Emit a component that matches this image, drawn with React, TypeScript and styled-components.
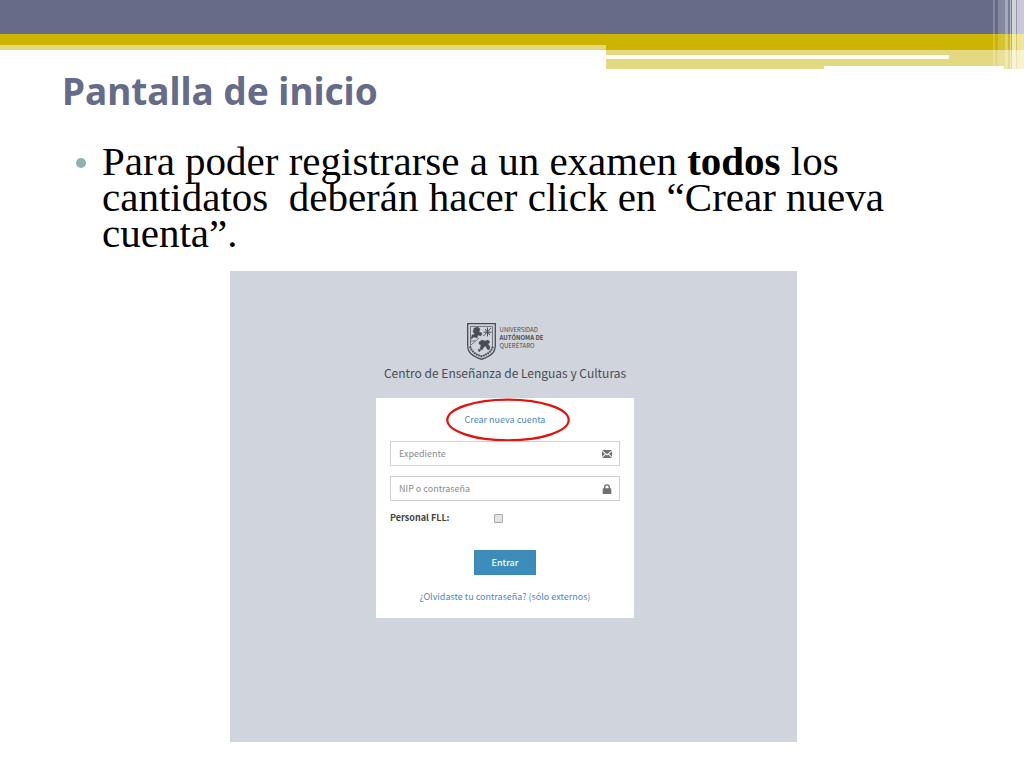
import React from 'react';
import styled, { createGlobalStyle } from 'styled-components';

const GlobalStyle = createGlobalStyle`
  *, *::before, *::after { box-sizing: border-box; }
  body { margin: 0; background: #fff; }
`;

const uiFont = `'Noto Sans CJK SC', 'Open Sans', sans-serif`;

const Slide = styled.div`
  display: flex;
  flex-direction: column;
  min-height: 100vh;
  background: #fff;
`;

const Banner = styled.header`
  position: relative;
`;

const Band = styled.div<{ $color: string; $height: number }>`
  height: ${(p) => p.$height}px;
  background: ${(p) => p.$color};
`;

const StepRow = styled.div`
  display: grid;
  grid-template-columns: 606fr 418fr;
  height: 24px;
`;

const StepLeft = styled.div`
  height: 5px;
  background: #e4d980;
`;

const StepRight = styled.div`
  display: flex;
  flex-direction: column;
  background: #e4d980;
  border-top: 5px solid #ccb400;
`;

const WhiteLine = styled.div`
  width: 82%;
  height: 4px;
  margin-top: 5px;
  background: #fffef6;
  border-radius: 0 1px 1px 0;
`;

const WhiteNotch = styled.div`
  width: 43%;
  height: 3px;
  margin: auto 20px 0 auto;
  background: #fff;
`;

const Strips = styled.div`
  position: absolute;
  top: 0;
  right: 0;
  bottom: 0;
  width: 31px;
  background: linear-gradient(
    to right,
    rgba(255, 255, 255, 0.2) 0 2px,
    transparent 2px 5px,
    rgba(255, 255, 255, 0.2) 5px 12px,
    rgba(255, 255, 255, 0.42) 12px 15px,
    rgba(255, 255, 255, 0.12) 15px 17px,
    rgba(255, 255, 255, 0.5) 17px 18px,
    rgba(255, 255, 255, 0.12) 18px 19px,
    rgba(255, 255, 255, 0.7) 19px 23px,
    rgba(255, 255, 255, 0.3) 23px 24px,
    rgba(255, 255, 255, 0.64) 24px 31px
  );
`;

const Content = styled.main`
  display: flex;
  flex-direction: column;
  padding: 0 62px 26px;
`;

const Title = styled.h1`
  margin: 0;
  color: #666b88;
  font: bold 37px/44px 'Noto Sans', sans-serif;
`;

const Bullets = styled.ul`
  list-style: none;
  margin: 30px 0 0;
  padding: 0 40px 0 40px;
`;

const Bullet = styled.li`
  position: relative;
  color: #000;
  font: 41px/36px 'Liberation Serif', serif;

  &::before {
    content: '';
    position: absolute;
    left: -26px;
    top: 15px;
    width: 10px;
    height: 10px;
    border-radius: 50%;
    background: #8fb3b0;
  }
`;

const Screen = styled.section`
  display: flex;
  flex-direction: column;
  align-items: center;
  align-self: center;
  width: 100%;
  max-width: 567px;
  min-height: 471px;
  margin: 20px 0 0 3px;
  padding: 52px 17px 124px 0;
  background: #d0d4dd;
  font-family: ${uiFont};
`;

const Logo = styled.div`
  display: flex;
  gap: 4px;
  color: #4a4c52;
`;

const LogoText = styled.div`
  padding-top: 3px;
  font: 6px/8px ${uiFont};

  strong, span { display: block; }
`;

const Center = styled.h2`
  margin: 3px 0 15px;
  color: #4a4c50;
  font-size: 12px;
  font-weight: 400;
  line-height: 20px;
`;

const Card = styled.form`
  display: flex;
  flex-direction: column;
  align-items: center;
  width: 258px;
  padding: 14px 14px 13px;
  background: #fff;
  font-size: 9px;
  line-height: 16px;
`;

const Highlight = styled.div`
  position: relative;
`;

const Ring = styled.svg`
  position: absolute;
  left: 50%;
  top: 50%;
  width: 124px;
  height: 43px;
  margin: -22px 0 0 -59px;
  pointer-events: none;
`;

const Link = styled.a`
  color: #5088b8;
  text-decoration: none;
`;

const Field = styled.label`
  display: flex;
  align-items: center;
  width: 100%;
  height: 25px;
  padding: 0 7px 0 8px;
  border: 1px solid #cdd1da;
  color: #707070;

  & + & { margin-top: 10px; }
`;

const Fields = styled.div`
  width: 100%;
  margin: 13px 0 9px;
`;

const Input = styled.input`
  flex: 1;
  min-width: 0;
  padding: 0;
  border: 0;
  outline: 0;
  background: transparent;
  font: 9px/16px ${uiFont};

  &::placeholder { color: #8c8c8c; opacity: 1; }
`;

const CheckRow = styled.div`
  display: grid;
  grid-template-columns: 104px 1fr;
  align-items: center;
  width: 100%;
  color: #444;
  font-weight: 700;
`;

const Check = styled.input`
  appearance: none;
  width: 9px;
  height: 9px;
  margin: 0;
  border: 1px solid #a8a8a8;
  border-radius: 1px;
  background: #e4e4e4;
`;

const Submit = styled.button`
  width: 62px;
  height: 25px;
  margin: 24px 0 14px;
  padding: 0;
  border: 1px solid #3c87b3;
  background: #3c8dbc;
  color: #fff;
  font: 500 9px/16px ${uiFont};
`;

const Shield = () => (
  <svg width="29" height="37" viewBox="0 0 29 37" fill="none" stroke="currentColor" aria-hidden="true">
    <path d="M.7.7h27.6v22c0 7-5 10.500-13.800 13.600C5.700 33.200.7 29.700.7 22.700z" strokeWidth="1.300" />
    <path d="M3.500 3.500h22v19c0 5-3.500 8-11 10.700-7.500-2.700-11-5.700-11-10.700z" strokeWidth=".7" />
    <path d="M4 22l8-7M3.500 18h5" strokeWidth=".7" />
    <path d="M7 5l4-1 2 2-1 3 3 1-1 3-3-1-1 3-3-1-3 2 1-4 3-1-2-2zM12 19l3-2 3 1 3-1 2 2-2 2 2 3-1 3-2-1-1-3-2 1-2 3-2-1 1-4-2-1zM11 26l3 1-2 2z" fill="currentColor" strokeWidth=".4" />
    <path d="M16.500 13l7.500-8M18 6l5 6M20.500 4.500v9M16.500 9.200h8" strokeWidth="1" />
    <path d="M3 23.500c2 5.500 5.500 8 11.500 10 6-2 9.500-4.500 11.500-10" strokeWidth="2" strokeDasharray="1.500 1" />
  </svg>
);

const Envelope = () => (
  <svg width="10" height="8" viewBox="0 0 10 8" fill="currentColor" aria-hidden="true">
    <path d="M0 0h10L5 4.300zM0 1.200l3 2.600L0 7zM10 1.200L7 3.800 10 7zM3.700 4.400L5 5.500l1.300-1.100L9.800 8H.2z" />
  </svg>
);

const Lock = () => (
  <svg width="10" height="10" viewBox="0 0 10 10" aria-hidden="true">
    <path d="M2.700 5V3.200a2.300 2.300 0 0 1 4.600 0V5" fill="none" stroke="currentColor" strokeWidth="1.400" />
    <rect x=".7" y="4.300" width="8.600" height="5.700" rx=".6" fill="currentColor" />
  </svg>
);

export default function App() {
  return (
    <Slide>
      <GlobalStyle />
      <Banner>
        <Band $color="#666b88" $height={34} />
        <Band $color="#ccb400" $height={11} />
        <StepRow>
          <StepLeft />
          <StepRight>
            <WhiteLine />
            <WhiteNotch />
          </StepRight>
        </StepRow>
        <Strips />
      </Banner>
      <Content>
        <Title>Pantalla de inicio</Title>
        <Bullets>
          <Bullet>
            Para poder registrarse a un examen <strong>todos</strong> los
            cantidatos&nbsp; deberán hacer click en “Crear nueva cuenta”.
          </Bullet>
        </Bullets>
        <Screen>
          <Logo>
            <Shield />
            <LogoText>
              <span>UNIVERSIDAD</span>
              <strong>AUTÓNOMA DE</strong>
              <span>QUERÉTARO</span>
            </LogoText>
          </Logo>
          <Center>Centro de Enseñanza de Lenguas y Culturas</Center>
          <Card onSubmit={(e) => e.preventDefault()}>
            <Highlight>
              <Link href="#crear">Crear nueva cuenta</Link>
              <Ring viewBox="0 0 124 43" aria-hidden="true">
                <ellipse cx="62" cy="22" rx="60.700" ry="20.300" fill="none" stroke="#e3120f" strokeWidth="2.200" />
              </Ring>
            </Highlight>
            <Fields>
              <Field>
                <Input type="text" placeholder="Expediente" aria-label="Expediente" />
                <Envelope />
              </Field>
              <Field>
                <Input type="password" placeholder="NIP o contraseña" aria-label="NIP o contraseña" />
                <Lock />
              </Field>
            </Fields>
            <CheckRow>
              <label htmlFor="personal">Personal FLL:</label>
              <Check id="personal" type="checkbox" />
            </CheckRow>
            <Submit type="submit">Entrar</Submit>
            <Link href="#recuperar">¿Olvidaste tu contraseña? (sólo externos)</Link>
          </Card>
        </Screen>
      </Content>
    </Slide>
  );
}
